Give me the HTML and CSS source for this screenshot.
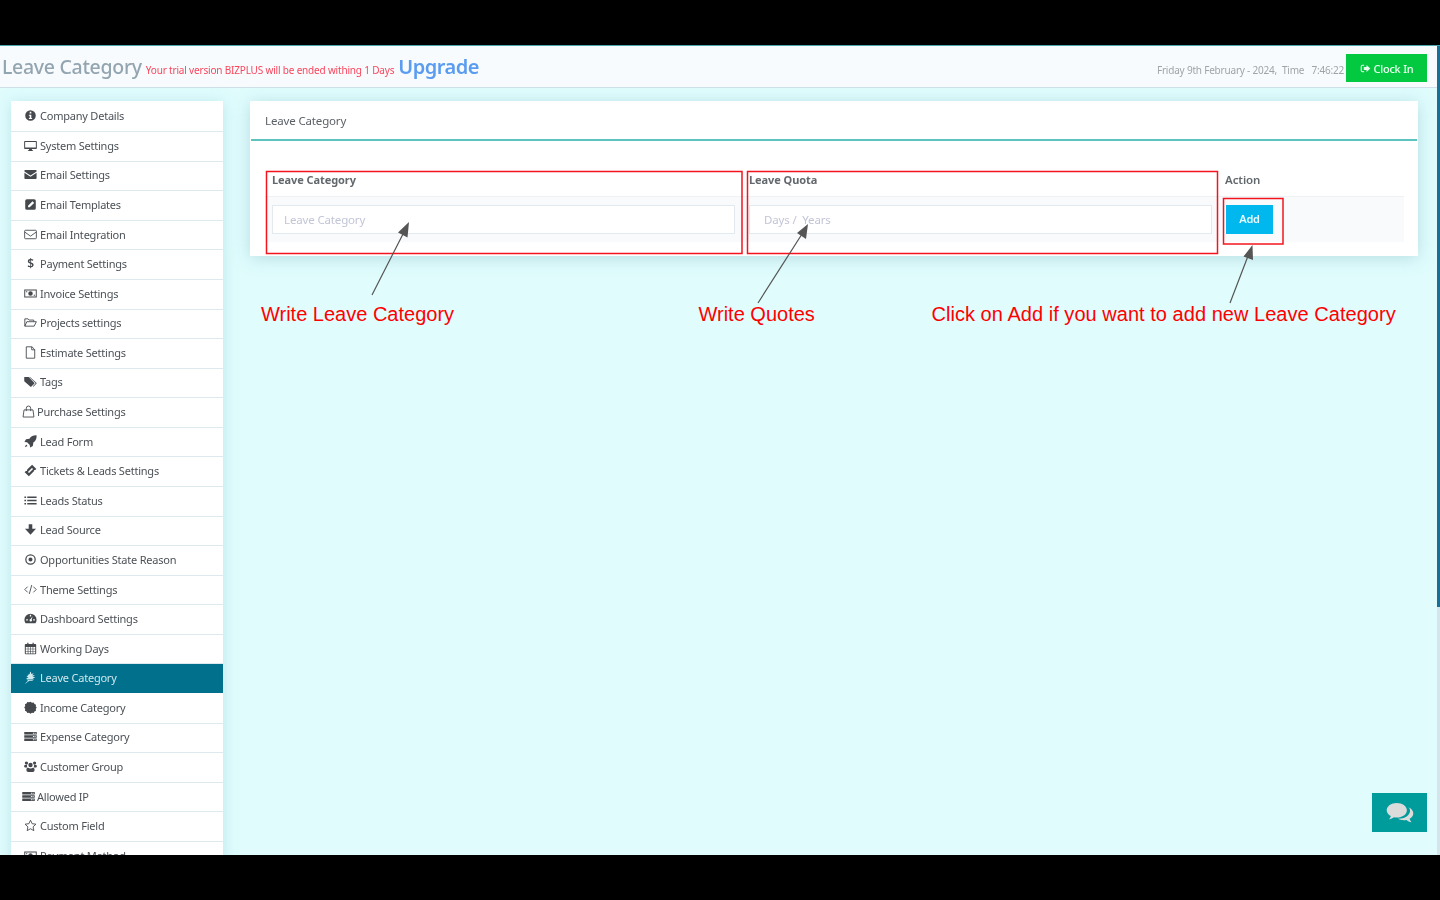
FILE: index.html
```html
<!DOCTYPE html>
<html lang="en">
<head>
<meta charset="utf-8">
<title>Leave Category</title>
<link rel="stylesheet" href="styles.css">
</head>
<body>
<svg class="sprite" width="0" height="0" aria-hidden="true">
  <symbol id="i-info" viewBox="0 0 16 16"><path fill-rule="evenodd" d="M8 1.500a6.500 6.500 0 1 1 0 13 6.500 6.500 0 0 1 0-13zM7 3.500v2h2v-2zM6 7v1.300h1v2.700H6v1.400h4V11H9V7z"/></symbol>
  <symbol id="i-desktop" viewBox="0 0 16 16"><path fill-rule="evenodd" d="M1 2.500h14a.8.8 0 0 1 .8.8v8.200a.8.8 0 0 1-.8.8H9.600l.4 1.400h1.200v1H4.800v-1H6l.4-1.400H1a.8.8 0 0 1-.8-.8V3.300A.8.8 0 0 1 1 2.500zM1.400 3.700v6.800h13.200V3.700z"/></symbol>
  <symbol id="i-mail" viewBox="0 0 16 16"><path d="M.5 3.500a1 1 0 0 1 1-1h13a1 1 0 0 1 1 1v.8L8 9.200.5 4.300zM.5 5.800 8 10.700l7.500-4.900v6.700a1 1 0 0 1-1 1h-13a1 1 0 0 1-1-1z"/></symbol>
  <symbol id="i-edit" viewBox="0 0 16 16"><path fill-rule="evenodd" d="M3.500 1.500h9a2 2 0 0 1 2 2v9a2 2 0 0 1-2 2h-9a2 2 0 0 1-2-2v-9a2 2 0 0 1 2-2zM10.500 4 5 9.500V11.500h2L12.500 6z"/></symbol>
  <symbol id="i-mail-o" viewBox="0 0 16 16"><path fill="none" stroke="currentColor" stroke-width="1.100" d="M1.800 2.800h12.400a1 1 0 0 1 1 1v8.400a1 1 0 0 1-1 1H1.800a1 1 0 0 1-1-1V3.800a1 1 0 0 1 1-1zM1 5l7 5 7-5"/></symbol>
  <symbol id="i-money" viewBox="0 0 16 16"><path fill-rule="evenodd" d="M.3 3h15.400v10H.3zM1.500 4.200v7.600h13V4.200zM8 5.200a2.800 2.800 0 1 1 0 5.600 2.800 2.800 0 0 1 0-5.600zM2.500 5.200h1.500v1.200H2.500zM12 9.600h1.500v1.200H12z"/></symbol>
  <symbol id="i-folder" viewBox="0 0 16 16"><path fill="none" stroke="currentColor" stroke-width="1.100" stroke-linejoin="round" d="M1 12.500V3.500h4l1.300 1.500h5.700v2M1 12.500 3.500 7h11.700l-2.700 5.500z"/></symbol>
  <symbol id="i-file" viewBox="0 0 16 16"><path fill="none" stroke="currentColor" stroke-width="1.100" stroke-linejoin="round" d="M2.800 1h7l3.400 3.400V15H2.800zM9.500 1v3.700h3.700"/></symbol>
  <symbol id="i-tags" viewBox="0 0 16 16"><path d="M.3 2.500h5.400l6.900 6.900a1 1 0 0 1 0 1.400l-3.500 3.500a1 1 0 0 1-1.400 0L.3 7.800zM7.300 2.500l7.900 7a1 1 0 0 1 0 1.400L11.500 14.500l-.6-.6 3-3.100a1 1 0 0 0 0-1.400L6.400 2.500z"/></symbol>
  <symbol id="i-bag" viewBox="0 0 16 16"><path fill="none" stroke="currentColor" stroke-width="1.100" d="M2.500 6h11l1.200 8.800H1.300zM5.300 7.500V4a2.700 2.700 0 0 1 5.400 0v3.500"/></symbol>
  <symbol id="i-rocket" viewBox="0 0 16 16"><path d="M15.500.5c.3 3.500-1 6.500-4 8.800l-.6 4.200-3.400 2-.4-3.300-3.300-3.300L.5 8.500l2-3.400 4.200-.6C9 1.500 12 .2 15.500.500zM2.600 11.600l1.800 1.800L1 15z"/></symbol>
  <symbol id="i-ticket" viewBox="0 0 16 16"><path fill-rule="evenodd" d="M10 .8 15.200 6 13.800 7.400a1.300 1.300 0 0 0-1.600 1.600L6 15.200.8 10 2.200 8.600a1.300 1.300 0 0 0 1.700-1.700zM9.800 4.800 4.800 9.800l1.400 1.400 5-5z"/></symbol>
  <symbol id="i-list" viewBox="0 0 16 16"><path d="M.5 3h2v2h-2zM4 3h11.500v2H4zM.5 7h2v2h-2zM4 7h11.500v2H4zM.5 11h2v2h-2zM4 11h11.500v2H4z"/></symbol>
  <symbol id="i-down" viewBox="0 0 16 16"><path d="M5.800 1.500h4.400v5.700h4.600L8 14.500 1.200 7.200h4.600z"/></symbol>
  <symbol id="i-dot" viewBox="0 0 16 16"><path fill-rule="evenodd" d="M8 1.500a6.500 6.500 0 1 1 0 13 6.500 6.500 0 0 1 0-13zM8 3a5 5 0 1 0 0 10A5 5 0 0 0 8 3zM8 5.500a2.500 2.500 0 1 1 0 5 2.500 2.500 0 0 1 0-5z"/></symbol>
  <symbol id="i-code" viewBox="0 0 16 16"><path fill="none" stroke="currentColor" stroke-width="1.100" d="M4.500 4.500 1 8l3.500 3.500M11.500 4.500 15 8l-3.500 3.500M9.500 2.500l-3 11"/></symbol>
  <symbol id="i-gauge" viewBox="0 0 16 16"><path fill-rule="evenodd" d="M8 2a7.500 7.500 0 0 1 7.500 7.500c0 1.700-.5 3.100-1.400 4.300H1.900A7.100 7.100 0 0 1 .5 9.500 7.500 7.500 0 0 1 8 2zM7.200 3.400v2h1.600v-2zM2.700 8.800v1.600h2V8.800zM11.300 8.800v1.600h2V8.800zM10.600 5.200 8.200 8.700a1.500 1.500 0 1 0 1.300.6z"/></symbol>
  <symbol id="i-cal" viewBox="0 0 16 16"><path fill-rule="evenodd" d="M4 .8h1.500v1.600h5V.8H12v1.600h2a1 1 0 0 1 1 1V14.200a1 1 0 0 1-1 1H2a1 1 0 0 1-1-1V3.400a1 1 0 0 1 1-1h2zM2.200 6v8h2.400v-2.200H2.200v-.8h2.400V9H2.200v-.8h2.400V6zM5.400 6v2.200h2.200V6zM8.400 6v2.200h2.200V6zM11.400 6v2.200h2.400V6zM5.400 9v2h2.200V9zM8.400 9v2h2.200V9zM11.400 9v2h2.400V9zM5.400 11.800V14h2.200v-2.200zM8.400 11.800V14h2.200v-2.200zM11.400 11.800V14h2.400v-2.200z"/></symbol>
  <symbol id="i-leaf" viewBox="0 0 16 16"><path d="M8 .5c.8 1.300 1 2 .8 3.200L12 2.700 10 5.200h3.500l-3 2.200H14l-3.500 2.300H2.500L5.500 7.400H3L5.500 5.200H3.800L7 3.700C7 2.500 7.300 1.500 8 .5zM3 10.600h9.500l-2.500 1.400H6.500L2 15.500l-.5-.5 3.500-3z"/></symbol>
  <symbol id="i-cert" viewBox="0 0 16 16"><path d="M8 .8l1.800 1.200 2.100-.3 1 1.900 1.900 1-.3 2.100L15.700 8l-1.200 1.800.3 2.100-1.900 1-1 1.900-2.100-.3L8 15.700l-1.800-1.200-2.100.3-1-1.900-1.900-1 .3-2.100L.3 8l1.200-1.800-.3-2.100 1.900-1 1-1.900 2.100.3z"/></symbol>
  <symbol id="i-server" viewBox="0 0 16 16"><path fill-rule="evenodd" d="M.3 2.500h15.400v3H.3zM.3 6.500h15.400v3H.3zM.3 10.500h15.400v3H.3zM11 3.300v1.300h1.200V3.300zM13 3.300v1.300h1.200V3.300zM11 7.300v1.300h1.200V7.300zM13 7.300v1.300h1.200V7.300zM11 11.300v1.300h1.200v-1.300zM13 11.300v1.300h1.200v-1.300z"/></symbol>
  <symbol id="i-users" viewBox="0 0 16 16"><path d="M8 3.500a2.700 2.700 0 1 1 0 5.400 2.700 2.700 0 0 1 0-5.400zM3 1.800a2 2 0 1 1 0 4 2 2 0 0 1 0-4zM13 1.800a2 2 0 1 1 0 4 2 2 0 0 1 0-4zM.2 7c0-.6.5-.8 1-.8h2.500c-.3.800-.1 2 .6 3H2c-1 0-1.800-.5-1.800-1.300zM15.800 7c0-.6-.5-.8-1-.8h-2.500c.3.800.1 2-.6 3H14c1 0 1.800-.5 1.800-1.300zM5 9.500c.8.500 1.800 1 3 1s2.200-.5 3-1c1.400 0 2 1 2 2.800 0 1.700-1 2.400-2.200 2.400H5.200C4 14.700 3 14 3 12.300c0-1.800.6-2.800 2-2.800z"/></symbol>
  <symbol id="i-star" viewBox="0 0 16 16"><path fill="none" stroke="currentColor" stroke-width="1.100" stroke-linejoin="round" d="M8 1.500l2 4.300 4.700.6-3.500 3.200.9 4.700L8 12l-4.100 2.300.9-4.700L1.300 6.400 6 5.800z"/></symbol>
  <symbol id="i-signin" viewBox="0 0 16 16"><path d="M6 2.500H3.500A2.500 2.500 0 0 0 1 5v6a2.500 2.500 0 0 0 2.500 2.500H6V12H3.500a1 1 0 0 1-1-1V5a1 1 0 0 1 1-1H6zM9.500 3 15 8l-5.500 5V10.200H5.500V5.800h4z"/></symbol>
  <symbol id="i-chat" viewBox="0 0 30 24"><path d="M11.500 1C17.600 1 22.500 4.500 22.500 9s-4.900 8-11 8c-1 0-2-.1-3-.3-1.500 1.100-3.300 1.900-5.500 2.300 1-1 1.700-2.200 2-3.600C2.300 13.900.5 11.600.5 9 .5 4.500 5.400 1 11.500 1zM24.100 5.700C27.300 7 29.500 9.400 29.500 12.300c0 2.500-1.600 4.600-4 6 .3 1.400 1 2.600 2 3.700-2.300-.3-4-1.200-5.500-2.400-1 .2-2 .3-3 .3-2.400 0-4.700-.6-6.400-1.600 7.400.2 13.400-3.500 13.400-9 0-1.100-.7-2.600-1.900-3.600z"/></symbol>
</svg>

<div class="letterbox"></div>
<main class="app">
  <header class="topbar">
    <div class="topbar-left">
      <h1 class="page-title">Leave Category</h1>
      <span class="trial">Your trial version BIZPLUS will be ended withing 1 Days</span>
      <a class="upgrade">Upgrade</a>
    </div>
    <div class="topbar-right">
      <span class="clock-text">Friday 9th February - 2024,&nbsp; Time &nbsp;&nbsp;7:46:22</span>
      <button class="clock-btn"><svg class="clock-icon"><use href="#i-signin"/></svg>Clock In</button>
    </div>
  </header>
  <div class="content">
    <nav class="sidebar">
      <a class="row"><svg class="ico"><use href="#i-info"/></svg>Company Details</a>
      <a class="row"><svg class="ico"><use href="#i-desktop"/></svg>System Settings</a>
      <a class="row"><svg class="ico"><use href="#i-mail"/></svg>Email Settings</a>
      <a class="row"><svg class="ico"><use href="#i-edit"/></svg>Email Templates</a>
      <a class="row"><svg class="ico"><use href="#i-mail-o"/></svg>Email Integration</a>
      <a class="row"><span class="ico dollar">$</span>Payment Settings</a>
      <a class="row"><svg class="ico"><use href="#i-money"/></svg>Invoice Settings</a>
      <a class="row"><svg class="ico"><use href="#i-folder"/></svg>Projects settings</a>
      <a class="row"><svg class="ico"><use href="#i-file"/></svg>Estimate Settings</a>
      <a class="row"><svg class="ico"><use href="#i-tags"/></svg>Tags</a>
      <a class="row tight"><svg class="ico"><use href="#i-bag"/></svg>Purchase Settings</a>
      <a class="row"><svg class="ico"><use href="#i-rocket"/></svg>Lead Form</a>
      <a class="row"><svg class="ico"><use href="#i-ticket"/></svg>Tickets &amp; Leads Settings</a>
      <a class="row"><svg class="ico"><use href="#i-list"/></svg>Leads Status</a>
      <a class="row"><svg class="ico"><use href="#i-down"/></svg>Lead Source</a>
      <a class="row"><svg class="ico"><use href="#i-dot"/></svg>Opportunities State Reason</a>
      <a class="row"><svg class="ico"><use href="#i-code"/></svg>Theme Settings</a>
      <a class="row"><svg class="ico"><use href="#i-gauge"/></svg>Dashboard Settings</a>
      <a class="row"><svg class="ico"><use href="#i-cal"/></svg>Working Days</a>
      <a class="row active"><svg class="ico"><use href="#i-leaf"/></svg>Leave Category</a>
      <a class="row"><svg class="ico"><use href="#i-cert"/></svg>Income Category</a>
      <a class="row"><svg class="ico"><use href="#i-server"/></svg>Expense Category</a>
      <a class="row"><svg class="ico"><use href="#i-users"/></svg>Customer Group</a>
      <a class="row tight"><svg class="ico"><use href="#i-server"/></svg>Allowed IP</a>
      <a class="row"><svg class="ico"><use href="#i-star"/></svg>Custom Field</a>
      <a class="row"><svg class="ico"><use href="#i-money"/></svg>Payment Method</a>
    </nav>
    <section class="card">
      <div class="card-head">Leave Category</div>
      <div class="card-body">
        <div class="table">
          <div class="th">Leave Category</div>
          <div class="th">Leave Quota</div>
          <div class="th th-action">Action</div>
          <div class="td"><input class="field" placeholder="Leave Category"></div>
          <div class="td"><input class="field field-quota" placeholder="Days /  Years"></div>
          <div class="td"><button class="add">Add</button></div>
        </div>
      </div>
    </section>
  </div>
  <button class="chat" aria-label="Chat"><svg class="chat-icon"><use href="#i-chat"/></svg></button>
  <div class="scroll-track"><div class="scroll-thumb"></div></div>
</main>
<div class="letterbox"></div>

<svg class="notes" viewBox="0 0 1440 900" width="1440" height="900">
  <rect class="box" x="266.500" y="171.500" width="475.500" height="82"/>
  <rect class="box" x="747.500" y="171.500" width="470" height="82"/>
  <rect class="box" x="1223.500" y="198.500" width="59.500" height="45.500"/>
  <path class="shaft" d="M372 295 403 234M758 303 802 234M1230 303 1248 256"/>
  <path class="head" d="M409 222 407.500 237.500 398 232.500zM808 224 806 239 797 233zM1252.500 245 1253 260 1243.500 256.500z"/>
  <text class="note" x="261" y="321">Write Leave Category</text>
  <text class="note" x="698.500" y="321">Write Quotes</text>
  <text class="note note-long" x="931.500" y="321">Click on Add if you want to add new Leave Category</text>
</svg>
</body>
</html>
```
FILE: styles.css
```css
* { box-sizing: border-box; }
html, body { margin: 0; height: 900px; overflow: hidden; }
body {
  position: relative;
  background: #000;
  font-family: "Noto Sans", "Open Sans", sans-serif;
  display: flex;
  flex-direction: column;
}
.sprite { position: absolute; }
.letterbox { height: 45px; flex: none; background: #000; }
.app {
  position: relative;
  height: 810px;
  flex: none;
  overflow: hidden;
  background: #e0fcfd;
  border-top: 1px solid #4aa7ad;
  filter: blur(.35px);
}
.topbar {
  height: 42px;
  display: flex;
  justify-content: space-between;
  background: #f8fbfd;
  border-bottom: 1px solid #cfe0e8;
  padding: 0 13px 0 2px;
}
.topbar-left { display: flex; align-items: center; gap: 4px; }
.page-title { margin: 0; font-size: 19.500px; font-weight: 500; letter-spacing: -.3px; color: #93a5b1; }
.trial { font-size: 10px; letter-spacing: -.18px; color: #f8465c; padding-top: 6px; }
.upgrade { font-size: 20px; font-weight: 600; letter-spacing: -.5px; color: #5a9cf0; }
.topbar-right { display: flex; align-items: flex-start; gap: 2px; padding-top: 8px; }
.clock-text { font-size: 10px; letter-spacing: -.2px; color: #a0a4a8; padding-top: 9px; white-space: pre; }
.clock-btn {
  width: 81px;
  height: 28px;
  border: 0;
  background: #02c93f;
  color: #eafff0;
  font: 500 11px "Noto Sans", sans-serif;
  letter-spacing: -.25px;
  display: flex;
  align-items: center;
  justify-content: center;
  gap: 3px;
  padding: 0;
}
.clock-icon { width: 11px; height: 11px; fill: currentColor; }
.content { display: flex; align-items: flex-start; padding: 13px 22px 0 11px; gap: 27px; }
.sidebar { width: 212px; flex: none; padding-top: 1.500px; background: #fff; box-shadow: 0 2px 14px rgba(120, 190, 200, .35); }
.row {
  height: 29.580px;
  display: flex;
  align-items: center;
  padding: 0 0 2px 13px;
  gap: 3px;
  font-size: 11px;
  letter-spacing: -.22px;
  color: #4c5156;
  background: #fff;
  border-bottom: 1.500px solid #dde9ef;
  white-space: nowrap;
}
.row.active { background: #00708c; color: #cfe8ee; border-bottom-color: #fff; }
.row.tight { padding-left: 11px; gap: 2px; }
.ico { width: 13px; height: 13px; flex: none; fill: #45494d; color: #45494d; }
.active .ico { fill: #cfe8ee; color: #cfe8ee; }
.dollar { font-size: 12px; font-weight: 600; line-height: 13px; text-align: center; }
.card { flex: 1; height: 155px; background: #fff; box-shadow: 0 2px 16px rgba(120, 180, 190, .4); }
.card-head {
  height: 40px;
  margin: 0 1px;
  padding: 0 0 0 14px;
  display: flex;
  align-items: center;
  font-size: 11.500px;
  letter-spacing: -.15px;
  color: #5c6166;
  border-bottom: 2px solid #5cc3bf;
}
.card-body { padding: 27px 14px 0 15px; }
.table { display: grid; grid-template-columns: 477px 477px 185px; grid-template-rows: 29px 45px; }
.th { padding: 4px 0 0 7px; font-size: 11px; font-weight: 700; letter-spacing: -.08px; color: #63686d; border-bottom: 1px solid #eef2f5; }
.th-action { font-size: 11.500px; font-weight: 600; padding-left: 6px; }
.td { background: #f8fafc; padding: 8px 7px; }
.field {
  display: block;
  width: 100%;
  height: 29px;
  padding: 0 11px;
  border: 1.500px solid #e2eaef;
  background: #fff;
  font: 11.500px "Noto Sans", sans-serif;
  letter-spacing: -.15px;
  outline: none;
}
.field-quota { padding-left: 14px; }
.field::placeholder { color: #c2c5d6; opacity: 1; }
.add {
  display: block;
  width: 47px;
  height: 29px;
  border: 0;
  padding: 0 0 2px;
  background: #00b7ee;
  color: #e8f9ff;
  font: 600 11px "Noto Sans", sans-serif;
  letter-spacing: -.2px;
}
.chat {
  position: absolute;
  left: 1372px;
  top: 747px;
  width: 55px;
  height: 39px;
  border: 0;
  padding: 0;
  background: #009b9b;
  display: flex;
  align-items: center;
  justify-content: center;
}
.chat-icon { width: 28px; height: 22px; fill: #dcdcdc; }
.scroll-track { position: absolute; right: 0; top: 0; bottom: 0; width: 3px; background: #d4e6ec; }
.scroll-thumb { height: 561px; background: #1a6f96; }
.notes { position: absolute; left: 0; top: 0; pointer-events: none; }
.box { fill: none; stroke: #f4141e; stroke-width: 1.500; }
.shaft { fill: none; stroke: #555; stroke-width: 1.200; }
.head { fill: #555; }
.note { font-family: "Liberation Sans", Arial, sans-serif; font-size: 20px; fill: #f00; }
.note-long { letter-spacing: .035px; }
```
